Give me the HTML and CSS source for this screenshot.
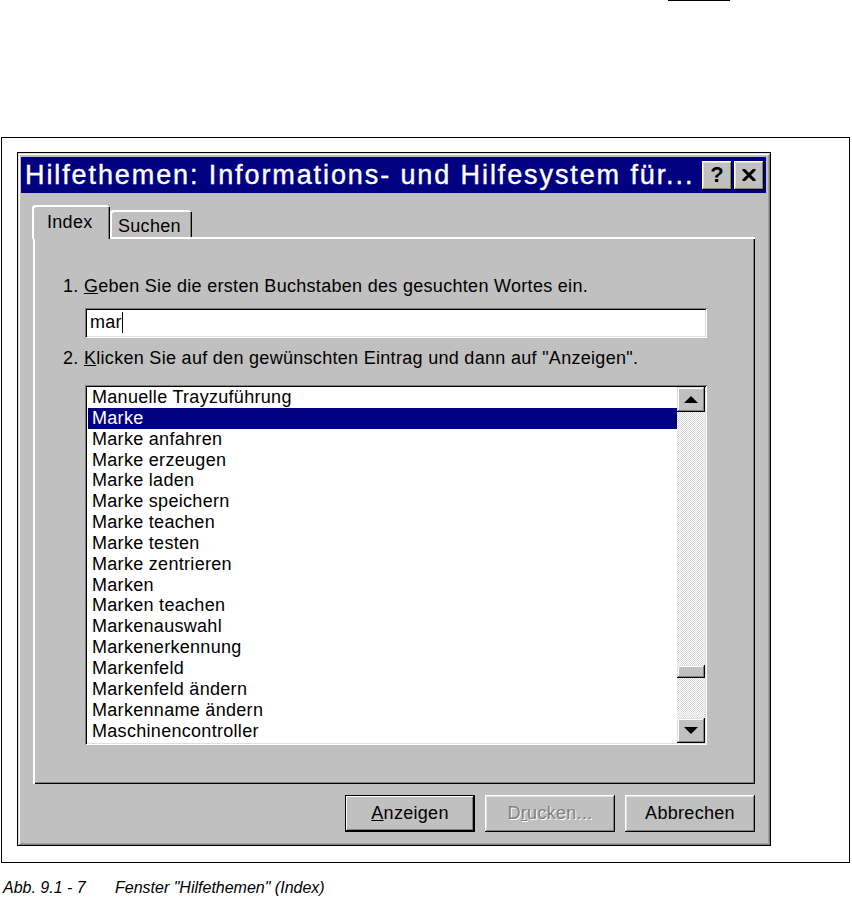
FILE: index.html
```
<!DOCTYPE html>
<html>
<head>
    <title>Hilfethemen</title>
    <link rel="stylesheet" href="styles.css">
</head>
<body>
  <div class="topline"></div>
  <div class="figure">
    <div class="window">
      <div class="titlebar">
        <span class="title">Hilfethemen: Informations- und Hilfesystem für...</span>
        <div class="caption-buttons">
          <div class="cap-btn">?</div>
          <div class="cap-btn">
            <svg width="14" height="12" viewBox="0 0 14 12"><path d="M1 0 L13 12 M13 0 L1 12" stroke="#000" stroke-width="3"/></svg>
          </div>
        </div>
      </div>
      <div class="window-body">
        <div class="tabs">
          <div class="tab active">Index</div>
          <div class="tab">Suchen</div>
        </div>
        <div class="tab-panel">
          <p class="step">1. <u>G</u>eben Sie die ersten Buchstaben des gesuchten Wortes ein.</p>
          <div class="field">mar<span class="caret"></span></div>
          <p class="step step-two">2. <u>K</u>licken Sie auf den gewünschten Eintrag und dann auf "Anzeigen".</p>
          <div class="listbox">
            <ul class="items">
              <li>Manuelle Trayzuführung</li>
              <li class="selected">Marke</li>
              <li>Marke anfahren</li>
              <li>Marke erzeugen</li>
              <li>Marke laden</li>
              <li>Marke speichern</li>
              <li>Marke teachen</li>
              <li>Marke testen</li>
              <li>Marke zentrieren</li>
              <li>Marken</li>
              <li>Marken teachen</li>
              <li>Markenauswahl</li>
              <li>Markenerkennung</li>
              <li>Markenfeld</li>
              <li>Markenfeld ändern</li>
              <li>Markenname ändern</li>
              <li>Maschinencontroller</li>
            </ul>
            <div class="scrollbar">
              <div class="sb-btn">
                <svg width="14" height="8" viewBox="0 0 14 8"><path d="M7 0 L14 7 L0 7 Z" fill="#000"/></svg>
              </div>
              <div class="sb-track"><div class="sb-thumb"></div></div>
              <div class="sb-btn">
                <svg width="14" height="8" viewBox="0 0 14 8"><path d="M0 0 L14 0 L7 7 Z" fill="#000"/></svg>
              </div>
            </div>
          </div>
        </div>
        <div class="actions">
          <div class="button default"><u>A</u>nzeigen</div>
          <div class="button disabled">D<u>r</u>ucken...</div>
          <div class="button">Abbrechen</div>
        </div>
      </div>
    </div>
  </div>
  <p class="fig-caption"><span class="fig-no">Abb. 9.1 - 7</span><span>Fenster "Hilfethemen" (Index)</span></p>
</body>
</html>
```

FILE: styles.css
```
body {
    margin: 0;
    background-color: #fff;
    font-family: "Liberation Sans", Arial, sans-serif;
    color: #000;
}

.topline {
    margin-left: 668px;
    width: 62px;
    height: 1px;
    background-color: #000;
}

.figure {
    box-sizing: border-box;
    margin: 136px 0 0 1px;
    width: 849px;
    height: 726px;
    border: 1px solid #000;
    padding: 14px 0 0 15px;
}

/* window frame */
.window {
    box-sizing: border-box;
    width: 754px;
    height: 694px;
    border: 1px solid #000;
    background-color: #c0c0c0;
    padding: 4px 4px 4px 3px;
    box-shadow: inset 1px 1px #dfdfdf, inset -1px -1px #808080, inset 2px 2px #fff, inset -2px -2px #a0a0a0;
}

.titlebar {
    height: 36px;
    background-color: #000080;
    display: flex;
    align-items: center;
    justify-content: space-between;
    padding: 0 2px 0 4px;
}

.title {
    color: #fff;
    font-size: 27px;
    letter-spacing: 1.9px;
    -webkit-text-stroke: 0.4px #fff;
    white-space: nowrap;
}

.caption-buttons {
    display: flex;
    gap: 2px;
}

.cap-btn {
    box-sizing: border-box;
    width: 30px;
    height: 29px;
    background-color: #c0c0c0;
    display: flex;
    align-items: center;
    justify-content: center;
    font-weight: bold;
    font-size: 22px;
    box-shadow: inset -1px -1px #000, inset 1px 1px #fff, inset -2px -2px #808080, inset 2px 2px #dfdfdf;
}

.window-body {
    padding: 12px 11px 0 12px;
    letter-spacing: 0.3px;
}

/* tabs */
.tabs {
    display: flex;
    align-items: flex-end;
    height: 32px;
    position: relative;
    z-index: 1;
}

.tab {
    box-sizing: border-box;
    height: 27px;
    padding: 0 8px 0 8px;
    font-size: 18px;
    display: flex;
    align-items: center;
    background-color: #c0c0c0;
    border-radius: 3px 3px 0 0;
    box-shadow: inset 2px 2px #fff, inset -1px 0 #000, inset -2px 0 #808080;
}

.tab + .tab {
    width: 82px;
    padding-top: 5px;
}

.tab.active {
    width: 78px;
    height: 34px;
    margin: 0 0 -2px -1px;
    padding: 0 0 0 15px;
}

.tab-panel {
    box-sizing: border-box;
    height: 547px;
    padding: 39px 48px 0 30px;
    box-shadow: inset 2px 2px #fff, inset -1px -1px #000, inset -2px -2px #808080;
}

.step {
    margin: 0;
    font-size: 18px;
    line-height: 20px;
    white-space: nowrap;
}

.step-two {
    margin-top: 10px;
}

.field {
    box-sizing: border-box;
    margin: 12px 0 0 22px;
    width: 622px;
    height: 30px;
    padding: 3px 0 0 5px;
    background-color: #fff;
    font-size: 18px;
    line-height: 22px;
    box-shadow: inset 1px 1px #808080, inset -1px -1px #fff, inset 2px 2px #000, inset -2px -2px #dfdfdf;
}

.caret {
    display: inline-block;
    width: 1px;
    height: 21px;
    background-color: #000;
    vertical-align: -5px;
}

/* list */
.listbox {
    box-sizing: border-box;
    display: flex;
    margin: 17px 0 0 22px;
    width: 622px;
    height: 360px;
    padding: 2px;
    background-color: #fff;
    box-shadow: inset 1px 1px #808080, inset -1px -1px #fff, inset 2px 2px #000, inset -2px -2px #dfdfdf;
}

.items {
    flex: 1;
    list-style: none;
    margin: 0;
    padding: 0 0 0 1px;
}

.items li {
    height: 20.85px;
    line-height: 20.85px;
    padding-left: 4px;
    font-size: 18px;
    white-space: nowrap;
}

.items li.selected {
    background-color: #000080;
    color: #fff;
}

.scrollbar {
    width: 28px;
    display: flex;
    flex-direction: column;
}

.sb-btn {
    height: 25px;
    background-color: #c0c0c0;
    display: flex;
    align-items: center;
    justify-content: center;
    box-shadow: inset -1px -1px #000, inset 1px 1px #dfdfdf, inset -2px -2px #808080, inset 2px 2px #fff;
}

.sb-track {
    flex: 1;
    background: conic-gradient(#d8d8d8 25%, #fff 0 50%, #d8d8d8 0 75%, #fff 0) 0 0 / 2px 2px;
}

.sb-thumb {
    margin-top: 253px;
    height: 13px;
    background-color: #c0c0c0;
    box-shadow: inset -1px -1px #000, inset 1px 1px #dfdfdf, inset -2px -2px #808080, inset 2px 2px #fff;
}

/* buttons */
.actions {
    display: flex;
    justify-content: flex-end;
    gap: 10px;
    margin-top: 11px;
}

.button {
    box-sizing: border-box;
    width: 130px;
    height: 37px;
    display: flex;
    align-items: center;
    justify-content: center;
    font-size: 18px;
    background-color: #c0c0c0;
    box-shadow: inset -1px -1px #000, inset 1px 1px #fff, inset -2px -2px #808080, inset 2px 2px #dfdfdf;
}

.button.default {
    box-shadow: inset 0 0 0 1px #000, inset -2px -2px #000, inset 2px 2px #fff, inset -3px -3px #808080;
}

.button.disabled {
    color: #808080;
    text-shadow: 1px 1px #fff;
}

.fig-caption {
    display: flex;
    margin: 16px 0 0 3px;
    font-size: 16px;
    font-style: italic;
}

.fig-no {
    width: 112px;
}
```
